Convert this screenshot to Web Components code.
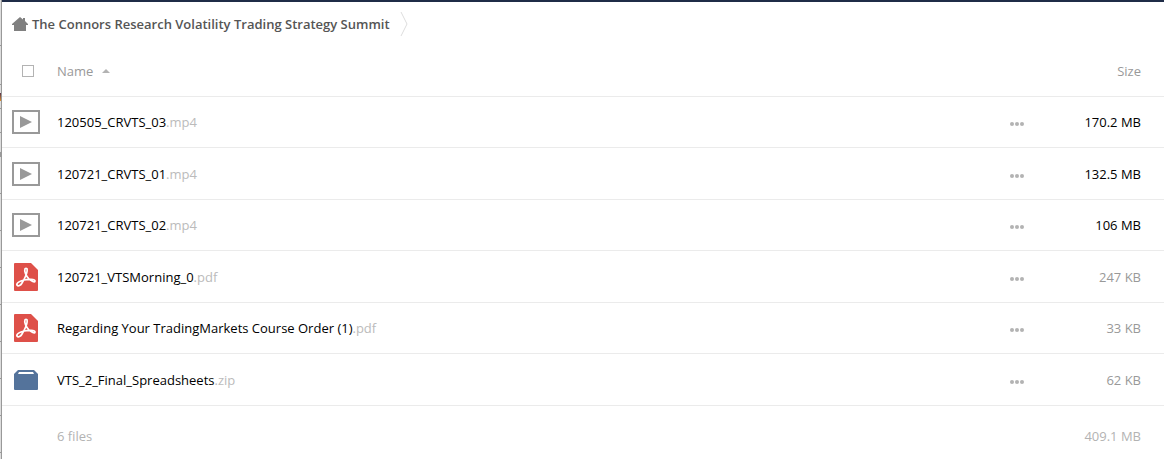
<!DOCTYPE html>
<html lang="en">
<head>
<meta charset="utf-8">
<meta name="viewport" content="width=device-width, initial-scale=1">
<title>The Connors Research Volatility Trading Strategy Summit</title>
<style>
  body {
    margin: 0;
    background: #fff;
    color: #000;
    font: 13px/20px "Open Sans", sans-serif;
  }
</style>
</head>
<body>
<cloud-folder>
  <folder-path slot="path">The Connors Research Volatility Trading Strategy Summit</folder-path>
  <file-list></file-list>
</cloud-folder>

<script>
const FILES = [
  { name: '120505_CRVTS_03', ext: 'mp4', type: 'video', size: '170.2 MB' },
  { name: '120721_CRVTS_01', ext: 'mp4', type: 'video', size: '132.5 MB' },
  { name: '120721_CRVTS_02', ext: 'mp4', type: 'video', size: '106 MB' },
  { name: '120721_VTSMorning_0', ext: 'pdf', type: 'pdf', size: '247 KB' },
  { name: 'Regarding Your TradingMarkets Course Order (1)', ext: 'pdf', type: 'pdf', size: '33 KB' },
  { name: 'VTS_2_Final_Spreadsheets', ext: 'zip', type: 'archive', size: '62 KB' }
];
const TOTAL_SIZE = '409.1 MB';

const ICONS = {
  video: `
    <svg width="28" height="24" viewBox="0 0 28 24">
      <rect x="1" y="1" width="26" height="22" fill="none" stroke="#999" stroke-width="2"/>
      <path d="M8 6v12l12-6z" fill="#999"/>
    </svg>`,
  pdf: `
    <svg width="24" height="28" viewBox="0 0 24 28">
      <path d="M1 0h16l7 7v20a1 1 0 0 1-1 1H1a1 1 0 0 1-1-1V1a1 1 0 0 1 1-1z" fill="#de5049"/>
      <path d="M3 22c-1-2 3-4 7-5 4-1 11-1 11 1 0 2-4 0-6-2-3-3-5-8-4-10 0-1 2-1 2 0 1 3-3 11-5 14-1 2-4 4-5 2z" fill="none" stroke="#fff" stroke-width="1.7" stroke-linejoin="round"/>
    </svg>`,
  archive: `
    <svg width="24" height="20" viewBox="0 0 24 20">
      <path d="M4 0h16l4 4v15a1 1 0 0 1-1 1H1a1 1 0 0 1-1-1V4z" fill="#54739b"/>
      <path d="M5 2h14l1 2H4z" fill="#fff"/>
    </svg>`
};

class CloudFolder extends HTMLElement {
  constructor() {
    super();
    this.attachShadow({ mode: 'open' }).innerHTML = `
      <style>
        :host {
          display: flex;
          min-height: 100vh;
        }

        /* sliver of the page lying behind the panel */
        .edge {
          flex: none;
          width: 2px;
          box-sizing: border-box;
          border-right: 1px solid #999;
          background:
            linear-gradient(#55304a, #e0902c) 0 93px / 1px 8px no-repeat,
            linear-gradient(#999, #999) 0 152px / 1px 5px no-repeat,
            linear-gradient(#999, #999) 0 45px / 1px 1px no-repeat,
            linear-gradient(#999, #999) 0 84px / 1px 1px no-repeat,
            linear-gradient(#999, #999) 0 108px / 1px 1px no-repeat,
            linear-gradient(#999, #999) 0 132px / 1px 1px no-repeat,
            linear-gradient(#ddd, #ddd) 0 0 / 1px 190px no-repeat,
            repeating-linear-gradient(#ddd 0 8px, #999 8px 9px, #ddd 9px 37px);
        }

        .panel {
          flex: 1;
          min-width: 0;
          border-top: 2px solid #1f2c47;
          background: #fff;
        }
      </style>
      <div class="edge"></div>
      <main class="panel">
        <slot name="path"></slot>
        <slot></slot>
      </main>
    `;
  }
}

class FolderPath extends HTMLElement {
  constructor() {
    super();
    this.attachShadow({ mode: 'open' }).innerHTML = `
      <style>
        :host {
          display: block;
          padding: 10px;
        }

        nav {
          display: flex;
          align-items: center;
          gap: 10px;
        }

        a {
          display: flex;
          align-items: center;
          gap: 4px;
          color: #555;
          font-weight: 600;
          text-decoration: none;
        }

        svg {
          display: block;
          flex: none;
        }
      </style>
      <nav aria-label="Folder path">
        <a href="#">
          <svg width="16" height="14" viewBox="0 0 16 14" aria-hidden="true">
            <path d="M8 0l3 2.500V1h2v3l3 3v1h-2v6H2V8H0V7z" fill="#808080"/>
          </svg>
          <slot></slot>
        </a>
        <svg width="8" height="24" viewBox="0 0 8 24" aria-hidden="true">
          <path d="M1 0l6 12-6 12" fill="none" stroke="#ddd"/>
        </svg>
      </nav>
    `;
  }
}

class FileIcon extends HTMLElement {
  constructor() {
    super();
    this.attachShadow({ mode: 'open' });
  }

  connectedCallback() {
    this.shadowRoot.innerHTML = `
      <style>
        :host {
          display: flex;
          justify-content: center;
          width: 28px;
        }

        svg {
          display: block;
        }
      </style>
      ${ICONS[this.getAttribute('type')]}
    `;
  }
}

class FileName extends HTMLElement {
  constructor() {
    super();
    this.attachShadow({ mode: 'open' });
  }

  connectedCallback() {
    this.shadowRoot.innerHTML = `
      <style>
        :host {
          display: block;
        }

        a {
          color: #000;
          text-decoration: none;
        }

        .ext {
          color: #bbb;
        }
      </style>
      <a href="#"><slot></slot><span class="ext">.${this.getAttribute('ext')}</span></a>
    `;
  }
}

class FileMenu extends HTMLElement {
  constructor() {
    super();
    this.attachShadow({ mode: 'open' }).innerHTML = `
      <style>
        :host {
          display: block;
        }

        button {
          display: block;
          padding: 10px 8px 6px;
          border: 0;
          background: none;
          cursor: pointer;
        }

        svg {
          display: block;
        }
      </style>
      <button type="button" aria-label="More actions">
        <svg width="14" height="4" viewBox="0 0 14 4" fill="#b3b3b3">
          <circle cx="2" cy="2" r="2"/>
          <circle cx="7" cy="2" r="2"/>
          <circle cx="12" cy="2" r="2"/>
        </svg>
      </button>
    `;
  }
}

class FileList extends HTMLElement {
  constructor() {
    super();
    this.attachShadow({ mode: 'open' });
  }

  connectedCallback() {
    this.shadowRoot.innerHTML = `
      <style>
        :host {
          display: block;
        }

        table {
          width: 100%;
          border-collapse: separate;
          border-spacing: 0;
          table-layout: fixed;
        }

        th, td {
          box-sizing: border-box;
          padding: 0;
          font-weight: 400;
          text-align: left;
          vertical-align: middle;
        }

        thead th, tbody td {
          border-bottom: 1px solid #ebebeb;
        }

        thead th {
          height: 51px;
          color: #999;
        }

        tbody td {
          height: 51px;
        }

        tbody tr:nth-child(even) td {
          height: 52px;
        }

        tfoot td {
          height: 60px;
          color: #b3b3b3;
        }

        .icon {
          width: 55px;
          padding-left: 10px;
        }

        .menu {
          width: 30px;
        }

        .size {
          width: 132px;
          padding-right: 23px;
          text-align: right;
        }

        .small {
          color: #999;
        }

        input {
          display: block;
          appearance: none;
          box-sizing: border-box;
          width: 12px;
          height: 12px;
          margin: 0 10px;
          border: 1px solid #b3b3b3;
          background: #fff;
        }

        input:checked {
          background: #b3b3b3;
        }

        .sort {
          display: inline-flex;
          align-items: center;
          gap: 9px;
          padding: 0;
          border: 0;
          background: none;
          color: inherit;
          font: inherit;
          cursor: pointer;
        }
      </style>
      <table>
        <thead>
          <tr>
            <th class="icon"><input type="checkbox" aria-label="Select all files"></th>
            <th aria-sort="ascending">
              <button class="sort" type="button">Name
                <svg width="8" height="4" viewBox="0 0 8 4" aria-hidden="true"><path d="M0 4l4-4 4 4z" fill="#b3b3b3"/></svg>
              </button>
            </th>
            <th class="menu"></th>
            <th class="size">Size</th>
          </tr>
        </thead>
        <tbody>${FILES.map(file => this._renderRow(file)).join('')}</tbody>
        <tfoot>
          <tr>
            <td></td>
            <td>${FILES.length} files</td>
            <td></td>
            <td class="size">${TOTAL_SIZE}</td>
          </tr>
        </tfoot>
      </table>
    `;
  }

  _renderRow({ name, ext, type, size }) {
    const isSmall = size.endsWith('KB');
    return `
      <tr>
        <td class="icon"><file-icon type="${type}"></file-icon></td>
        <td><file-name ext="${ext}">${name}</file-name></td>
        <td class="menu"><file-menu></file-menu></td>
        <td class="size${isSmall ? ' small' : ''}">${size}</td>
      </tr>`;
  }
}

customElements.define('cloud-folder', CloudFolder);
customElements.define('folder-path', FolderPath);
customElements.define('file-icon', FileIcon);
customElements.define('file-name', FileName);
customElements.define('file-menu', FileMenu);
customElements.define('file-list', FileList);
</script>
</body>
</html>
